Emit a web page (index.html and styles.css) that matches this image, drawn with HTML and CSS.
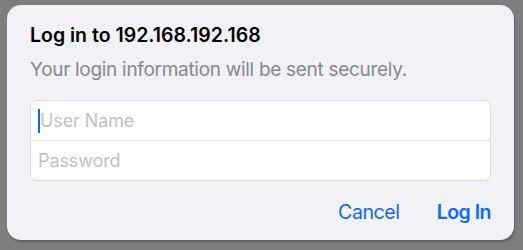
FILE: index.html
```html
<!DOCTYPE html>
<html>
<head>
<meta charset="utf-8">
<link rel="stylesheet" href="styles.css">
</head>
<body>
<div class="dialog">
  <div class="title">Log in to 192.168.192.168</div>
  <div class="subtitle">Your login information will be sent securely.</div>
  <div class="fields">
    <div class="field"><span class="caret"></span><span class="ph">User Name</span></div>
    <div class="field"><span class="ph">Password</span></div>
  </div>
  <div class="actions">
    <span class="btn">Cancel</span>
    <span class="btn primary">Log In</span>
  </div>
</div>
</body>
</html>
```
FILE: styles.css
```css
html, body { margin: 0; padding: 0; }
body {
  width: 523px;
  height: 250px;
  background: #7e7e7e;
  font-family: Inter, "Noto Sans", sans-serif;
  overflow: hidden;
}
.dialog {
  margin: 5px 9px 0 7px;
  height: 235px;
  background: #f1f1f6;
  border-radius: 14px;
  box-shadow: 1px 2px 2px rgba(0,0,0,0.25);
  padding: 19px 23px 0 23px;
  box-sizing: border-box;
}
.title {
  font-size: 19.5px;
  font-weight: 600;
  color: #000;
  line-height: 22px;
  letter-spacing: 0;
}
.subtitle {
  margin-top: 13px;
  font-size: 19px;
  color: #88888d;
  line-height: 22px;
  letter-spacing: -0.3px;
}
.fields {
  margin-top: 19px;
  background: #fff;
  border: 1px solid #dedee2;
  border-radius: 6px;
}
.field {
  height: 39px;
  display: flex;
  align-items: center;
  padding-left: 7px;
  font-size: 18px;
  color: #c2c2c6;
  letter-spacing: -0.1px;
}
.field + .field { border-top: 1px solid #dedee2; }
.caret {
  width: 2px;
  height: 24px;
  background: #0a68f5;
}
.actions {
  display: flex;
  justify-content: flex-end;
  gap: 37px;
  margin-top: 20px;
}
.btn {
  font-size: 19.5px;
  color: #0d6af2;
  line-height: 22px;
  letter-spacing: -0.4px;
}
.primary { font-weight: 600; letter-spacing: -0.5px; }
```
